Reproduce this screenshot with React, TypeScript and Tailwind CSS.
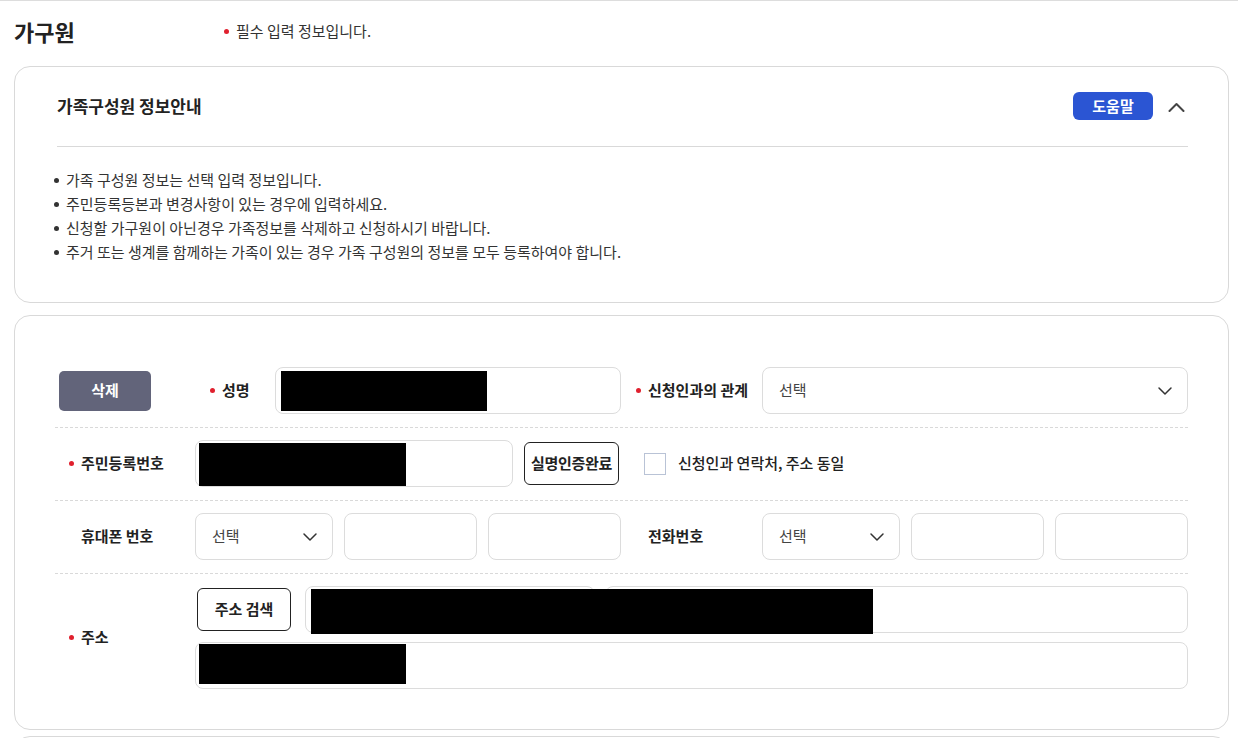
import { ChevronDown } from "lucide-react";

const guide = [
  "가족 구성원 정보는 선택 입력 정보입니다.",
  "주민등록등본과 변경사항이 있는 경우에 입력하세요.",
  "신청할 가구원이 아닌경우 가족정보를 삭제하고 신청하시기 바랍니다.",
  "주거 또는 생계를 함께하는 가족이 있는 경우 가족 구성원의 정보를 모두 등록하여야 합니다.",
];

function Dot() {
  return <span className="mr-[7px] inline-block h-[5px] w-[5px] shrink-0 rounded-full bg-[#e0202e]" />;
}

function Label({ text, required, className = "" }: { text: string; required?: boolean; className?: string }) {
  return (
    <div className={`flex shrink-0 items-center text-[15px] font-bold text-[#222] ${className}`}>
      {required && <Dot />}
      <span>{text}</span>
    </div>
  );
}

function Select({ className = "" }: { className?: string }) {
  return (
    <div className={`flex h-[47px] items-center justify-between rounded-[8px] border border-[#dcdcdc] bg-white pl-[16px] pr-[10px] ${className}`}>
      <span className="text-[15px] text-[#444]">선택</span>
      <ChevronDown size={24} strokeWidth={1.5} className="text-[#333]" />
    </div>
  );
}

function Field({ className = "", children }: { className?: string; children?: React.ReactNode }) {
  return (
    <div className={`flex h-[47px] items-center rounded-[8px] border border-[#dcdcdc] bg-white ${className}`}>
      {children}
    </div>
  );
}

export default function App() {
  return (
    <div className="h-[738px] overflow-hidden border-t border-[#dddddd] bg-white pl-[14px] pr-[9px] font-['Noto_Sans_CJK_KR','Noto_Sans',sans-serif] text-[#222]">
      <div className="mt-[14px] flex h-[32px] items-center">
        <h1 className="w-[210px] text-[22px] font-bold text-[#222]">가구원</h1>
        <div className="flex items-center text-[15px] text-[#333]">
          <Dot />
          필수 입력 정보입니다.
        </div>
      </div>

      <section className="mt-[19px] rounded-[16px] border border-[#d9d9d9] pb-[38px] pl-[42px] pr-[40px] pt-[25px]">
        <div className="flex h-[28px] items-center justify-between">
          <h2 className="text-[17px] font-bold text-[#222]">가족구성원 정보안내</h2>
          <div className="mr-[3px] flex items-center gap-[15px]">
            <button className="h-[28px] w-[80px] rounded-[6px] bg-[#2b55d3] text-[15px] font-bold text-white">
              도움말
            </button>
            <svg width="17" height="10" viewBox="0 0 17 10" fill="none" className="mt-[1px]">
              <path d="M1.5 9 L8.5 2 L15.5 9" stroke="#444" strokeWidth="2" strokeLinecap="round" strokeLinejoin="round" />
            </svg>
          </div>
        </div>
        <div className="mt-[26px] h-px bg-[#d9d9d9]" />
        <ul className="mt-[21px] text-[15px] leading-[24px] text-[#333]">
          {guide.map((g) => (
            <li key={g} className="-ml-[3px] flex items-center">
              <span className="mr-[7px] inline-block h-[5px] w-[5px] rounded-full bg-[#333]" />
              {g}
            </li>
          ))}
        </ul>
      </section>

      <section className="mt-[12px] rounded-[16px] border border-[#d9d9d9] px-[40px] pb-[27px] pt-[39px]">
        <div className="flex items-center border-b border-dashed border-[#d9d9d9] pb-[13px] pt-[12px]">
          <div className="w-[140px] shrink-0 pl-[4px]">
            <button className="h-[40px] w-[92px] rounded-[5px] bg-[#62647a] text-[15px] font-bold text-white">
              삭제
            </button>
          </div>
          <Label text="성명" required className="w-[80px] pl-[15px]" />
          <Field className="w-[346px]">
            <div className="ml-[5px] h-[40px] w-[206px] bg-black" />
          </Field>
          <Label text="신청인과의 관계" required className="w-[141px] pl-[15px]" />
          <Select className="flex-1" />
        </div>

        <div className="flex items-center border-b border-dashed border-[#d9d9d9] pb-[13px] pt-[12px]">
          <Label text="주민등록번호" required className="w-[140px] pl-[14px]" />
          <Field className="w-[318px]">
            <div className="ml-[3px] mt-[2px] h-[43px] w-[207px] bg-black" />
          </Field>
          <button className="ml-[11px] h-[43px] w-[95px] rounded-[6px] border border-[#222] text-[15px] font-bold tracking-[-0.3px] text-[#222]">
            실명인증완료
          </button>
          <span className="ml-[25px] h-[22px] w-[22px] border border-[#b9c3d6] bg-white" />
          <span className="ml-[12px] text-[15px] font-medium text-[#222]">신청인과 연락처, 주소 동일</span>
        </div>

        <div className="flex items-center border-b border-dashed border-[#d9d9d9] pb-[13px] pt-[12px]">
          <Label text="휴대폰 번호" className="w-[140px] pl-[26px]" />
          <Select className="w-[138px]" />
          <Field className="ml-[11px] w-[133px]" />
          <Field className="ml-[11px] w-[133px]" />
          <Label text="전화번호" className="w-[141px] pl-[27px]" />
          <Select className="w-[138px]" />
          <Field className="ml-[11px] w-[133px]" />
          <Field className="ml-[11px] w-[133px]" />
        </div>

        <div className="flex items-center pb-[13px] pt-[12px]">
          <Label text="주소" required className="w-[140px] pl-[14px]" />
          <div className="relative flex flex-1 flex-col gap-[9px]">
            <div className="flex items-center">
              <button className="ml-[2px] h-[43px] w-[94px] rounded-[6px] border border-[#222] text-[15px] font-bold text-[#222]">
                주소 검색
              </button>
              <Field className="ml-[14px] w-[290px]" />
              <Field className="ml-[10px] flex-1" />
            </div>
            <Field className="items-start">
              <div className="ml-[3px] mt-[1px] h-[40px] w-[207px] bg-black" />
            </Field>
            <div className="absolute left-[116px] top-[3px] h-[45px] w-[562px] bg-black" />
          </div>
        </div>
      </section>

      <section className="mt-[6px] h-[40px] rounded-[16px] border border-[#d9d9d9]" />
    </div>
  );
}
